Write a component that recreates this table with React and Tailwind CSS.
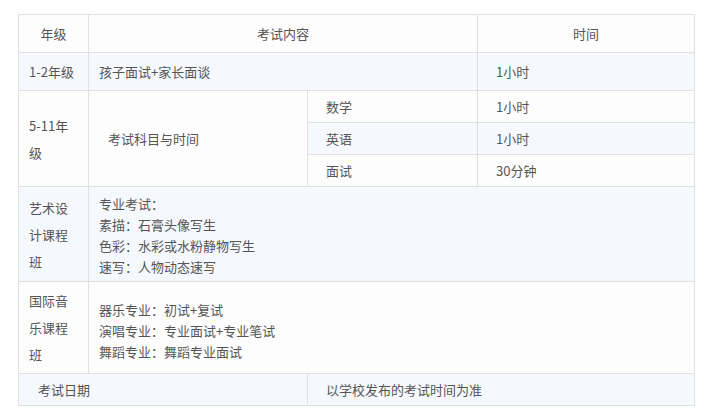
const cell = "border border-[#e0e0e0] align-middle";

export default function App() {
  return (
    <div className="min-h-[418px] bg-white pt-[14px] pl-[18px] font-['Noto_Sans_CJK_SC','Noto_Sans',sans-serif] text-[13px] text-[#555]">
      <table className="w-[676px] table-fixed border-collapse">
        <colgroup>
          <col className="w-[70px]" />
          <col className="w-[219px]" />
          <col className="w-[170px]" />
          <col className="w-[217px]" />
        </colgroup>
        <tbody>
          <tr className="h-[38px] bg-[#fdfdfd]">
            <td className={`${cell} text-center`}>年级</td>
            <td className={`${cell} text-center`} colSpan={2}>
              考试内容
            </td>
            <td className={`${cell} text-center`}>时间</td>
          </tr>
          <tr className="h-[38px] bg-[#f5f9fd]">
            <td className={`${cell} pl-[10px]`}>1-2年级</td>
            <td className={`${cell} pl-[10px]`} colSpan={2}>
              孩子面试+家长面谈
            </td>
            <td className={`${cell} pl-[18px]`}>1小时</td>
          </tr>
          <tr className="h-[32px] bg-[#fdfdfd]">
            <td className={`${cell} pl-[10px] pr-[12px] leading-[27px]`} rowSpan={3}>
              5-11年级
            </td>
            <td className={`${cell} pl-[19px]`} rowSpan={3}>
              考试科目与时间
            </td>
            <td className={`${cell} pl-[18px]`}>数学</td>
            <td className={`${cell} pl-[18px]`}>1小时</td>
          </tr>
          <tr className="h-[32px] bg-[#f5f9fd]">
            <td className={`${cell} pl-[18px]`}>英语</td>
            <td className={`${cell} pl-[18px]`}>1小时</td>
          </tr>
          <tr className="h-[32px] bg-[#fdfdfd]">
            <td className={`${cell} pl-[18px]`}>面试</td>
            <td className={`${cell} pl-[18px]`}>30分钟</td>
          </tr>
          <tr className="h-[95px] bg-[#f5f9fd]">
            <td className={`${cell} pl-[10px] pr-[8px] leading-[27px]`}>艺术设计课程班</td>
            <td className={`${cell} pl-[10px] pt-[2px] leading-[21px]`} colSpan={3}>
              <div>专业考试：</div>
              <div>素描：石膏头像写生</div>
              <div>色彩：水彩或水粉静物写生</div>
              <div>速写：人物动态速写</div>
            </td>
          </tr>
          <tr className="h-[92px] bg-[#fdfdfd]">
            <td className={`${cell} pl-[10px] pr-[8px] leading-[27px]`}>国际音乐课程班</td>
            <td className={`${cell} pl-[10px] pt-[6px] leading-[21px]`} colSpan={3}>
              <div>器乐专业：初试+复试</div>
              <div>演唱专业：专业面试+专业笔试</div>
              <div>舞蹈专业：舞蹈专业面试</div>
            </td>
          </tr>
          <tr className="h-[32px] bg-[#f5f9fd]">
            <td className={`${cell} pl-[19px]`} colSpan={2}>
              考试日期
            </td>
            <td className={`${cell} pl-[18px]`} colSpan={2}>
              以学校发布的考试时间为准
            </td>
          </tr>
        </tbody>
      </table>
    </div>
  );
}
